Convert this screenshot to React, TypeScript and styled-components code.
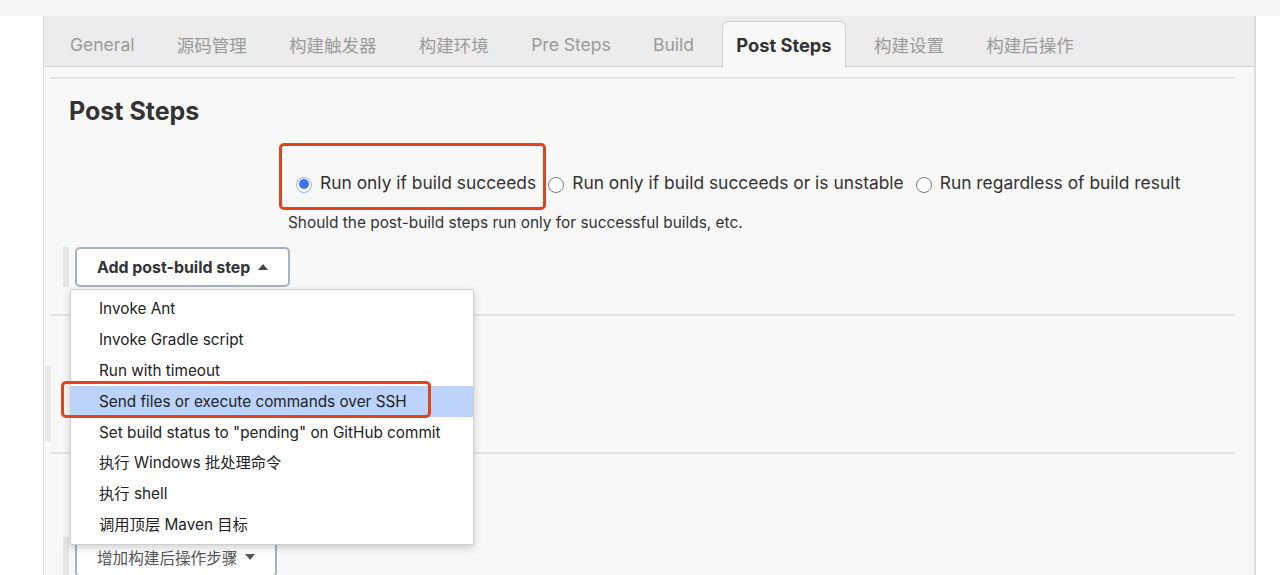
import React from "react";
import styled, { createGlobalStyle, css } from "styled-components";

const GlobalStyle = createGlobalStyle`
  html, body { margin: 0; padding: 0; background: #ffffff; }
  body { font-family: Inter, "Noto Sans CJK SC", sans-serif; color: #333; }
  * { box-sizing: border-box; }
`;

const Page = styled.div`
  width: 1280px;
  height: 575px;
  overflow: hidden;
  display: flex;
  flex-direction: column;
`;

const TopStrip = styled.div`
  height: 16px;
  background: #f6f6f6;
  flex: none;
`;

const Panel = styled.div`
  margin-left: 43px;
  width: 1213px;
  flex: 1;
  background: #f8f8f8;
  border-left: 1px solid #dcdcdc;
  border-right: 2px solid #dcdcdc;
  display: flex;
  flex-direction: column;
`;

const TabBar = styled.div`
  height: 51px;
  flex: none;
  background: #ececec;
  border-bottom: 1px solid #d3d3d3;
  display: flex;
  align-items: flex-end;
  padding-left: 12px;
`;

const Tab = styled.div<{ $active?: boolean }>`
  height: 45px;
  padding: 0 14px;
  margin-right: 14.3px;
  display: flex;
  align-items: center;
  font-size: 17.5px;
  color: #9a9a9a;
  white-space: nowrap;
  padding-top: 1px;
  ${(p) =>
    p.$active &&
    css`
      background: #f8f8f8;
      border: 1px solid #d0d0d0;
      border-bottom: none;
      border-radius: 6px 6px 0 0;
      margin-bottom: -1px;
      height: 46px;
      padding: 1px 13px 0;
      color: #333;
      font-weight: 700;
      font-size: 18.3px;
    `}
`;

const Content = styled.div`
  flex: 1;
  padding: 10px 19px 0 6px;
  display: flex;
  flex-direction: column;
`;

const Section = styled.div<{ $h?: number }>`
  border-top: 2px solid #e3e3e3;
  position: relative;
  ${(p) => p.$h !== undefined && css`height: ${p.$h}px;`}
  flex: none;
`;

const Heading = styled.h2`
  margin: 0;
  padding: 17px 0 0 19px;
  font-size: 25px;
  font-weight: 700;
  color: #333;
  line-height: 30px;
`;

const Setting = styled.div`
  margin-left: 238px;
  margin-top: 44px;
`;

const RadioGroup = styled.div`
  display: flex;
  align-items: center;
  padding-left: 8px;
  height: 24px;
`;

const Option = styled.label`
  position: relative;
  display: flex;
  align-items: center;
  height: 24px;
  margin-right: 12px;
  font-size: 17.4px;
  color: #333;
  white-space: nowrap;
`;

const RadioDot = styled.span<{ $on?: boolean }>`
  width: 16px;
  height: 16px;
  border-radius: 50%;
  background: #fff;
  border: 1px solid #7a7a7a;
  margin-right: 8px;
  margin-top: 5px;
  flex: none;
  position: relative;
  ${(p) =>
    p.$on &&
    css`
      border: 1.5px solid #8fb3f7;
      &::after {
        content: "";
        position: absolute;
        left: 1.5px;
        top: 1.5px;
        width: 10px;
        height: 10px;
        border-radius: 50%;
        background: #3d73f6;
      }
    `}
`;

const Annotation = styled.span<{ $l: number; $t: number; $r: number; $b: number }>`
  position: absolute;
  left: ${(p) => p.$l}px;
  top: ${(p) => p.$t}px;
  right: ${(p) => p.$r}px;
  bottom: ${(p) => p.$b}px;
  border: 3px solid #e1441a;
  border-radius: 5px;
  pointer-events: none;
  z-index: 5;
`;

const Help = styled.div`
  margin-top: 19px;
  font-size: 15.4px;
  color: #333;
`;

const ButtonRow = styled.div<{ $mt: number }>`
  display: flex;
  margin-top: ${(p) => p.$mt}px;
  margin-left: 13px;
  position: relative;
`;

const Grip = styled.div`
  width: 6px;
  background: #e6e6e6;
  flex: none;
`;

const StepButton = styled.button<{ $strong?: boolean }>`
  height: 40px;
  margin-left: 6px;
  padding: 0 20px;
  border: 2px solid #a9b1ba;
  border-radius: 5px;
  background: #fff;
  font-family: Inter, "Noto Sans CJK SC", sans-serif;
  font-size: ${(p) => (p.$strong ? 15.9 : 15.6)}px;
  font-weight: ${(p) => (p.$strong ? 700 : 400)};
  color: ${(p) => (p.$strong ? "#333" : "#555")};
  display: flex;
  align-items: center;
  gap: 8px;
`;

const Caret = styled.span<{ $up?: boolean }>`
  width: 0;
  height: 0;
  border-left: 5px solid transparent;
  border-right: 5px solid transparent;
  ${(p) =>
    p.$up
      ? css`border-bottom: 6px solid #444;`
      : css`border-top: 6px solid #555;`}
`;

const Menu = styled.div`
  position: absolute;
  left: 7px;
  top: 42px;
  width: 404px;
  padding: 4px 0;
  background: #fff;
  border: 1px solid #cfcfcf;
  box-shadow: 0 3px 8px rgba(0, 0, 0, 0.18);
  z-index: 10;
`;

const MenuItem = styled.div<{ $hl?: boolean }>`
  position: relative;
  height: 30.8px;
  display: flex;
  align-items: center;
  padding-left: 28px;
  font-size: 15.3px;
  line-height: 18px;
  color: #222;
  white-space: nowrap;
  ${(p) => p.$hl && css`background: #bcd3fb;`}
`;

const SideBar = styled.div`
  position: absolute;
  left: -5px;
  top: 50px;
  width: 6px;
  height: 75px;
  background: #e8e8e8;
`;

const tabs = ["General", "源码管理", "构建触发器", "构建环境", "Pre Steps", "Build", "Post Steps", "构建设置", "构建后操作"];

const items = [
  "Invoke Ant",
  "Invoke Gradle script",
  "Run with timeout",
  "Send files or execute commands over SSH",
  'Set build status to "pending" on GitHub commit',
  "执行 Windows 批处理命令",
  "执行 shell",
  "调用顶层 Maven 目标",
];

export default function App() {
  return (
    <>
      <GlobalStyle />
      <Page>
        <TopStrip />
        <Panel>
          <TabBar>
            {tabs.map((t) => (
              <Tab key={t} $active={t === "Post Steps"}>
                {t}
              </Tab>
            ))}
          </TabBar>
          <Content>
            <Section $h={237}>
              <Heading>Post Steps</Heading>
              <Setting>
                <RadioGroup>
                  <Option>
                    <RadioDot $on />
                    Run only if build succeeds
                    <Annotation $l={-17} $t={-27} $r={-10} $b={-16} />
                  </Option>
                  <Option>
                    <RadioDot />
                    Run only if build succeeds or is unstable
                  </Option>
                  <Option>
                    <RadioDot />
                    Run regardless of build result
                  </Option>
                </RadioGroup>
                <Help>Should the post-build steps run only for successful builds, etc.</Help>
              </Setting>
              <ButtonRow $mt={15}>
                <Grip />
                <StepButton $strong>
                  Add post-build step <Caret $up />
                </StepButton>
                <Menu>
                  {items.map((it, i) => (
                    <MenuItem key={it} $hl={i === 3}>
                      {it}
                      {i === 3 && <Annotation $l={-10} $t={-5} $r={42} $b={-1} />}
                    </MenuItem>
                  ))}
                </Menu>
              </ButtonRow>
            </Section>
            <Section $h={138}>
              <SideBar />
            </Section>
            <Section>
              <ButtonRow $mt={83}>
                <Grip />
                <StepButton>
                  增加构建后操作步骤 <Caret />
                </StepButton>
              </ButtonRow>
            </Section>
          </Content>
        </Panel>
      </Page>
    </>
  );
}
